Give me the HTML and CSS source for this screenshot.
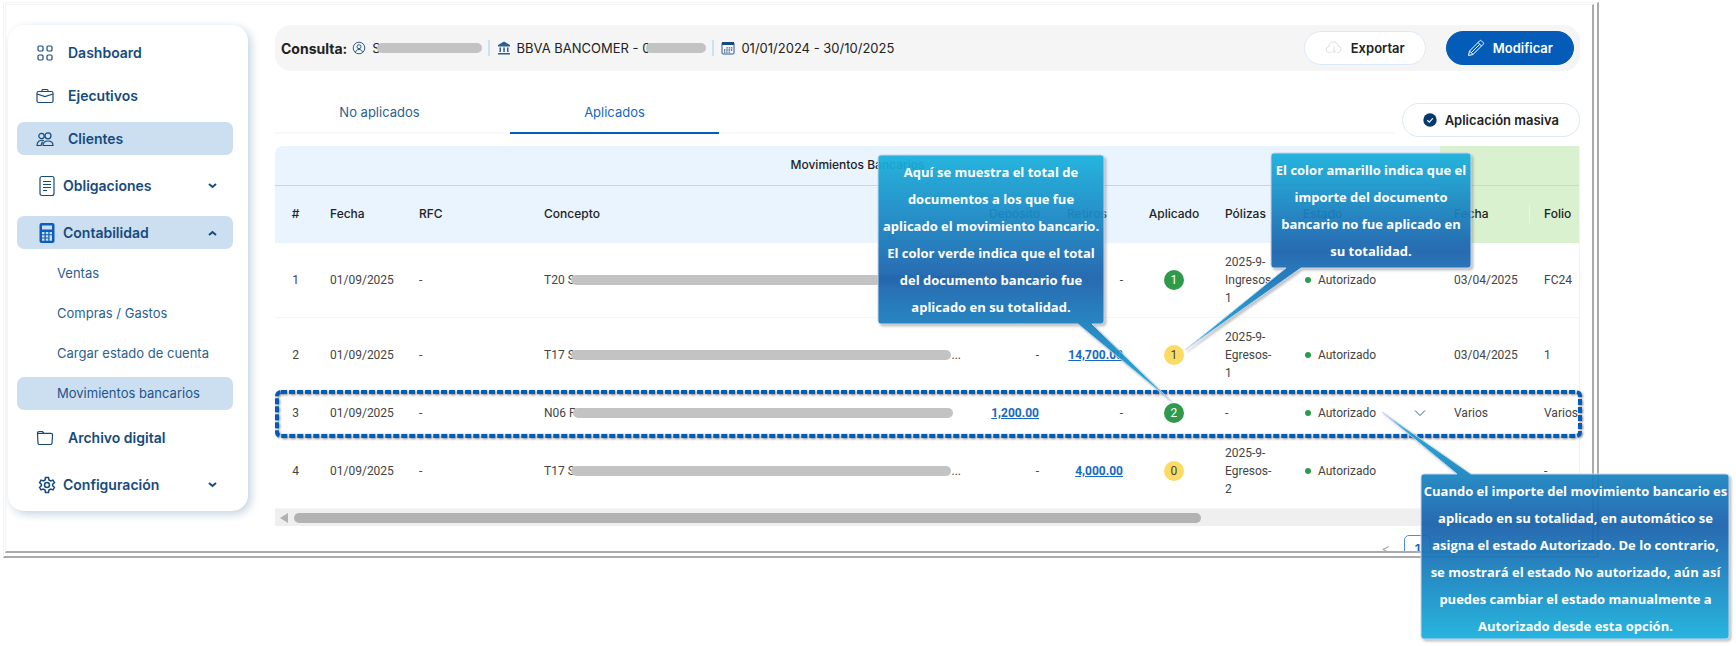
FILE: index.html
```html
<!DOCTYPE html>
<html lang="es">
<head>
<meta charset="utf-8">
<title>Movimientos bancarios</title>
<link rel="stylesheet" href="styles.css">
</head>
<body>
<div class="page">
  <div class="window">
    <div class="window-inner">
      <nav class="sidebar">
        <a class="item" href="#"><svg class="icon" viewBox="0 0 18 18"><rect x="2" y="2" width="5" height="5" rx="1.2"/><rect x="11" y="2" width="5" height="5" rx="1.2"/><rect x="2" y="11" width="5" height="5" rx="1.2"/><rect x="11" y="11" width="5" height="5" rx="1.2"/></svg>Dashboard</a>
        <a class="item" href="#"><svg class="icon" viewBox="0 0 18 18"><rect x="1" y="4.500" width="16" height="11" rx="1.500"/><path d="M6 4.500V3.500a1 1 0 0 1 1-1h4a1 1 0 0 1 1 1v1M1 7l8 2.500L17 7"/></svg>Ejecutivos</a>
        <a class="item active" href="#"><svg class="icon" viewBox="0 0 18 18"><circle cx="5.500" cy="6" r="2.700"/><circle cx="12" cy="5.800" r="3"/><path d="M7 15.500c0-3 2.200-4.500 5-4.500s5 1.500 5 4.500zM8 10.500c-4.500-1-7 1.500-7 5h4l1.500-4"/></svg>Clientes</a>
        <a class="item group" href="#"><svg class="icon tall" viewBox="0 0 18 22"><rect x="2" y="1.500" width="14" height="19" rx="2"/><path d="M5 6.500h8M5 9.500h8M5 12.500h8M5 15.500h4"/></svg>Obligaciones<svg class="caret" viewBox="0 0 9 6"><path d="M1 1l3.500 3L8 1"/></svg></a>
        <a class="item group active" href="#"><svg class="icon tall solid" viewBox="0 0 18 22"><rect x="1.500" y="1" width="15" height="20" rx="2"/><path class="cut" d="M4 3.500h10v4H4zM4 10h2.500v2.200H4zM7.800 10h2.500v2.200H7.800zM11.500 10H14v2.200h-2.500zM4 13.300h2.500v2.200H4zM7.800 13.300h2.500v2.200H7.800zM4 16.600h2.500v2.200H4zM7.800 16.600h2.500v2.200H7.800zM11.500 13.300H14v5.500h-2.500z"/></svg>Contabilidad<svg class="caret" viewBox="0 0 9 6"><path d="M1 5l3.500-3L8 5"/></svg></a>
        <div class="submenu">
          <a class="sub" href="#">Ventas</a>
          <a class="sub" href="#">Compras / Gastos</a>
          <a class="sub" href="#">Cargar estado de cuenta</a>
          <a class="sub active" href="#">Movimientos bancarios</a>
        </div>
        <a class="item" href="#"><svg class="icon" viewBox="0 0 18 18"><path d="M1.500 5V4A1.500 1.500 0 0 1 3 2.500h3.500L8 4.300h7A1.500 1.500 0 0 1 16.500 6v1L16 14a1.500 1.500 0 0 1-1.500 1.500h-11A1.500 1.500 0 0 1 2 14L1.500 5A1.200 1.200 0 0 1 2.700 4.300H8"/></svg>Archivo digital</a>
        <a class="item group" href="#"><svg class="icon bold" viewBox="0 0 24 24"><circle cx="12" cy="12" r="3.300"/><path d="M10 2h4l.6 3.200 2.300 1.300 3-1.100 2 3.500-2.400 2.100v2l2.400 2.100-2 3.500-3-1.100-2.300 1.300L14 22h-4l-.6-3.200-2.300-1.300-3 1.100-2-3.500L4.500 13v-2L2.100 8.900l2-3.500 3 1.100 2.300-1.300z"/></svg>Configuración<svg class="caret" viewBox="0 0 9 6"><path d="M1 1l3.500 3L8 1"/></svg></a>
      </nav>

      <main class="main">
        <header class="query">
          <strong class="query-title">Consulta:</strong>
          <span class="query-part"><svg class="qicon" viewBox="0 0 14 14"><circle cx="7" cy="7" r="5.800"/><circle cx="7" cy="5.700" r="2"/><path d="M3.500 11c.6-1.800 1.800-2.500 3.500-2.500s2.900.7 3.500 2.500"/></svg><span class="masked">S<span class="mask mask-name"></span></span></span>
          <span class="query-part"><svg class="qicon filled" viewBox="0 0 14 14"><path d="M7 0.500L13 4v1.500H1V4zM2.500 6.500H4V11H2.500zM6.300 6.500h1.500V11H6.300zM10 6.500h1.500V11H10zM1 12h12v1.500H1z"/></svg><span class="masked">BBVA BANCOMER - 0<span class="mask mask-account"></span></span></span>
          <span class="query-part"><svg class="qicon" viewBox="0 0 14 14"><rect x="1" y="1.500" width="12" height="11.500" rx="1"/><path class="fill" d="M1 1h12v3H1z"/><path class="dots" d="M5.500 6.800h6M3 9h8.500M3 11.200h6"/></svg>01/01/2024 - 30/10/2025</span>
          <div class="query-actions">
            <button class="btn"><svg class="bicon pale" viewBox="0 0 18 18"><path d="M6 13.500H4.500a3 3 0 0 1-.5-6 4.500 4.500 0 0 1 9-.5 3.300 3.300 0 0 1 .5 6.500H12M9 7v6.500M7 11.500l2 2 2-2"/></svg>Exportar</button>
            <button class="btn primary"><svg class="bicon" viewBox="0 0 18 18"><path d="M1.500 16.500l1-4.500L12.700 1.800a1.200 1.200 0 0 1 1.700 0l1.800 1.800a1.200 1.200 0 0 1 0 1.700L6 15.500zM2.500 12L6 15.500M11 3.500L14.500 7M4.300 13.700L12.800 5.200"/></svg>Modificar</button>
          </div>
        </header>

        <div class="tabs-row">
          <div class="tabs" role="tablist">
            <button class="tab" role="tab">No aplicados</button>
            <button class="tab selected" role="tab" aria-selected="true">Aplicados</button>
          </div>
          <button class="btn mass"><svg class="check" viewBox="0 0 14 14"><circle cx="7" cy="7" r="6.700"/><path d="M4.300 7.200l2 1.900 3.500-3.700"/></svg>Aplicación masiva</button>
        </div>

        <div class="table-wrap">
          <div class="table-view">
            <table class="grid">
              <colgroup><col class="c-num"><col class="c-date"><col class="c-rfc"><col><col class="c-dep"><col class="c-ret"><col class="c-apl"><col class="c-pol"><col class="c-est"><col class="c-date2"><col class="c-folio"></colgroup>
              <thead>
                <tr class="top"><th colspan="9">Movimientos Bancarios</th><th class="green" colspan="2"></th></tr>
                <tr class="heads"><th class="ctr">#</th><th>Fecha</th><th>RFC</th><th>Concepto</th><th class="num">Depósito</th><th class="ret">Retiros</th><th class="ctr">Aplicado</th><th>Pólizas</th><th>Estado</th><th class="green split">Fecha</th><th class="green">Folio</th></tr>
              </thead>
              <tbody>
                <tr><td class="ctr">1</td><td>01/09/2025</td><td>-</td><td><span class="masked">T20 S<span class="mask mask-text"></span></span></td><td class="num"></td><td class="num">-</td><td class="ctr"><span class="badge">1</span></td><td>2025-9-<br>Ingresos-<br>1</td><td><span class="state">Autorizado</span></td><td>03/04/2025</td><td>FC24</td></tr>
                <tr><td class="ctr">2</td><td>01/09/2025</td><td>-</td><td><span class="masked">T17 S<span class="mask mask-text"></span>...</span></td><td class="num">-</td><td class="num"><a href="#">14,700.00</a></td><td class="ctr"><span class="badge yellow">1</span></td><td>2025-9-<br>Egresos-<br>1</td><td><span class="state">Autorizado</span></td><td>03/04/2025</td><td>1</td></tr>
                <tr><td class="ctr">3</td><td>01/09/2025</td><td>-</td><td><span class="masked">N06 P<span class="mask mask-text mask-short"></span></span></td><td class="num"><a href="#">1,200.00</a></td><td class="num">-</td><td class="ctr"><span class="badge">2</span></td><td>-</td><td><span class="state">Autorizado<svg class="drop" viewBox="0 0 12 8"><path d="M1 1.500l5 5 5-5"/></svg></span></td><td>Varios</td><td>Varios</td></tr>
                <tr><td class="ctr">4</td><td>01/09/2025</td><td>-</td><td><span class="masked">T17 S<span class="mask mask-text"></span>...</span></td><td class="num">-</td><td class="num"><a href="#">4,000.00</a></td><td class="ctr"><span class="badge yellow">0</span></td><td>2025-9-<br>Egresos-<br>2</td><td><span class="state">Autorizado</span></td><td></td><td>-</td></tr>
              </tbody>
            </table>
          </div>
          <div class="scrollbar"><svg class="arrow" viewBox="0 0 8 10"><path d="M8 0v10L0 5z"/></svg><div class="thumb"></div></div>
          <svg class="highlight"><rect x="2" y="2" rx="4"/></svg>
        </div>

        <div class="pager"><button class="page-prev" aria-label="Anterior">&lt;</button><button class="page-num">1</button></div>
      </main>
    </div>
  </div>

  <div class="callout first">
    <svg class="bubble" viewBox="0 0 295 248"><defs><linearGradient id="g1" x1="0" y1="0" x2="0" y2="1"><stop offset="0" stop-color="#1ab1dc"/><stop offset=".5" stop-color="#1b62ac"/><stop offset="1" stop-color="#1ab1dc"/></linearGradient></defs><path fill="url(#g1)" d="M4 1H224a3 3 0 0 1 3 3V167a3 3 0 0 1-3 3H215L294 247L201 170H4a3 3 0 0 1-3-3V4a3 3 0 0 1 3-3z"/></svg>
    <p class="callout-text">Aquí se muestra el total de<br>documentos a los que fue<br>aplicado el movimiento bancario.<br>El color verde indica que el total<br>del documento bancario fue<br>aplicado en su totalidad.</p>
  </div>
  <div class="callout second">
    <svg class="bubble" viewBox="0 0 288 200"><defs><linearGradient id="g2" x1="0" y1="0" x2="0" y2="1"><stop offset="0" stop-color="#1ab1dc"/><stop offset=".5" stop-color="#1b62ac"/><stop offset="1" stop-color="#1ab1dc"/></linearGradient></defs><path fill="url(#g2)" d="M90 1H284a3 3 0 0 1 3 3V113a3 3 0 0 1-3 3H117L1 198L102 116H90a3 3 0 0 1-3-3V4a3 3 0 0 1 3-3z"/></svg>
    <p class="callout-text">El color amarillo indica que el<br>importe del documento<br>bancario no fue aplicado en<br>su totalidad.</p>
  </div>
  <div class="callout third">
    <svg class="bubble" viewBox="0 0 350 230"><defs><linearGradient id="g3" x1="0" y1="0" x2="0" y2="1"><stop offset="0" stop-color="#1ab1dc"/><stop offset=".5" stop-color="#1b62ac"/><stop offset="1" stop-color="#1ab1dc"/></linearGradient></defs><path fill="url(#g3)" d="M43 63H76L1 1L90 63H345a3 3 0 0 1 3 3V225a3 3 0 0 1-3 3H43a3 3 0 0 1-3-3V66a3 3 0 0 1 3-3z"/></svg>
    <p class="callout-text">Cuando el importe del movimiento bancario es<br>aplicado en su totalidad, en automático se<br>asigna el estado Autorizado. De lo contrario,<br>se mostrará el estado No autorizado, aún así<br>puedes cambiar el estado manualmente a<br>Autorizado desde esta opción.</p>
  </div>
</div>
</body>
</html>
```
FILE: styles.css
```css
* { box-sizing: border-box; }
body {
  margin: 0;
  background: #fff;
  font-family: Inter, "Liberation Sans", sans-serif;
  font-size: 13px;
  color: #222;
}
a { color: inherit; text-decoration: none; }
button { font: inherit; color: inherit; background: none; border: 0; padding: 0; cursor: pointer; }
svg { fill: none; stroke: currentColor; flex: none; display: block; }

.page { position: relative; padding: 2px 137px 88px 3px; }
.window { border: 1px solid #f3f3f5; border-right: 2px solid #aaa; border-bottom: 2px solid #aaa; padding: 1px 3px 3px 1px; }
.window-inner {
  display: flex;
  height: 549px;
  overflow: hidden;
  gap: 27px;
  padding: 20px 12px 0 2px;
  border: 1px solid #f3f3f5;
  border-right: 2px solid #aaa;
  border-bottom: 2px solid #aaa;
}

/* Sidebar */
.sidebar {
  flex: none;
  align-self: flex-start;
  width: 240px;
  padding: 11px 15px 10px 9px;
  display: flex;
  flex-direction: column;
  gap: 10px;
  border-radius: 16px;
  color: #174a7c;
  box-shadow: 3px 3px 10px #c4d3e0;
}
.item {
  display: flex;
  align-items: center;
  gap: 14px;
  height: 33px;
  padding: 0 16px 0 19px;
  border-radius: 7px;
  font-size: 14px;
  font-weight: 600;
}
.item.group { gap: 7px; margin-top: 4px; padding-left: 21px; }
.item.active, .sub.active { background: #ccdff1; }
.icon { width: 18px; height: 18px; stroke-width: 1.2; }
.icon.tall { height: 22px; }
.icon.bold { stroke-width: 2; }
.solid { fill: #0a5db8; stroke: none; }
.solid .cut { fill: #ccdff1; }
.caret { width: 9px; height: 6px; margin-left: auto; stroke-width: 2; }
.submenu { display: flex; flex-direction: column; gap: 7px; margin: -2px 0 1px; }
.sub { height: 33px; line-height: 33px; padding-left: 40px; border-radius: 7px; color: #2c5f8e; }
.sub.active { color: #1d5488; }

/* Main column */
.main { flex: 1; min-width: 0; }
.query {
  display: flex;
  align-items: center;
  height: 46px;
  padding: 0 6px;
  border-radius: 16px;
  background: #f5f5f5;
}
.query-title { font-size: 14px; margin-right: 5px; }
.query-part { display: flex; align-items: center; gap: 6px; padding-right: 6px; white-space: nowrap; }
.query-part + .query-part { border-left: 2px solid #cfe0f2; padding-left: 7px; }
.qicon { width: 14px; height: 14px; stroke: #2c5f8e; }
.qicon.filled { fill: #2c5f8e; stroke: none; }
.qicon .fill { fill: #174a7c; stroke: none; }
.qicon .dots { stroke-dasharray: 1.300 1; stroke-width: 1.300; }
.masked { display: flex; align-items: center; white-space: pre; }
.mask { background: #c3c3c3; height: 10px; border-radius: 5px; margin-left: -4px; }
.mask-name { width: 105px; }
.mask-account { width: 60px; }
.mask-text { flex: 1; }
.mask-short { margin-right: 8px; }
.query-actions { display: flex; gap: 20px; margin-left: auto; }
.btn {
  display: flex;
  align-items: center;
  justify-content: center;
  height: 34px;
  padding: 0 20px;
  gap: 8px;
  border: 1px solid #dceaf8;
  border-radius: 17px;
  background: #fff;
  font-weight: 600;
  white-space: nowrap;
}
.btn.primary { background: #045cb8; border-color: #045cb8; color: #fff; }
.bicon { width: 18px; height: 18px; }
.bicon.pale { stroke: #ddd; }
.check { width: 14px; height: 14px; fill: #06396f; stroke: none; }
.check path { fill: none; stroke: #fff; stroke-width: 1.200; }

.tabs-row { display: flex; align-items: flex-end; gap: 7px; margin-top: 30px; }
.tabs { flex: 1; display: flex; gap: 26px; border-bottom: 2px solid #f8f8f9; margin-bottom: 3px; }
.tab { width: 209px; height: 33px; padding-bottom: 10px; color: #2c5f8e; border-bottom: 2px solid transparent; margin-bottom: -2px; }
.tab.selected { color: #1868c0; border-color: #045cb8; }

/* Table */
.table-wrap { position: relative; margin-top: 9px; }
.table-view { overflow: hidden; border-radius: 8px 0 0 0; border-right: 1px solid #f3f3f3; }
.grid { width: calc(100% + 31px); table-layout: fixed; border-collapse: collapse; font-size: 12px; line-height: 18px; }
.c-num { width: 41px; } .c-date { width: 89px; } .c-rfc { width: 125px; }
.c-dep { width: 78px; } .c-ret { width: 84px; } .c-apl { width: 74px; }
.c-pol { width: 78px; } .c-est { width: 151px; } .c-date2 { width: 90px; } .c-folio { width: 80px; }
.grid th { background: #e9f4ff; font-weight: 500; text-align: left; padding: 0 14px; white-space: nowrap; }
.grid .top th { height: 39px; text-align: center; border-bottom: 1px solid #bcd8f2; }
.grid .heads th { height: 58px; }
.grid th.green { background: #daf1d0; }
.grid th.split { background: linear-gradient(#e9f4ff, #e9f4ff) right center / 1px 18px no-repeat #daf1d0; }
.grid td { font-family: Roboto, "Liberation Sans", sans-serif; color: #444; padding: 10px 14px; border-bottom: 1px solid #f5f5f5; white-space: nowrap; }
.grid .ctr { text-align: center; padding-left: 0; padding-right: 0; }
.grid .num { text-align: right; }
.grid a { color: #1868c0; font-weight: 700; text-decoration: underline; }
.badge {
  display: block;
  width: 20px;
  height: 20px;
  margin: 0 auto;
  line-height: 20px;
  border-radius: 50%;
  background: #2f9a4c;
  color: #fff;
}
.badge.yellow { background: #fddb63; color: #444; }
.state { display: flex; align-items: center; gap: 7px; padding-left: 2px; }
.state::before { content: ""; width: 6px; height: 6px; border-radius: 50%; background: #2f9a4c; }
.drop { width: 12px; height: 8px; margin-left: auto; stroke: #2c5f8e; }
.scrollbar { display: flex; align-items: center; gap: 6px; height: 17px; padding: 0 5px; background: #efefef; }
.arrow { width: 8px; height: 10px; fill: #b2b2b2; stroke: none; }
.thumb { width: 70%; height: 10px; border-radius: 5px; background: #b2b2b2; }
.highlight { position: absolute; left: 0; top: 244px; width: calc(100% + 2px); height: 50px; overflow: visible; filter: drop-shadow(1px 1px 1px #888); }
.highlight rect { width: calc(100% - 4px); height: 44px; stroke: #045cb8; stroke-width: 4; stroke-dasharray: 6 2; }

.pager { display: flex; align-items: center; justify-content: flex-end; gap: 14px; margin-top: 9px; padding-right: 149px; }
.page-prev { color: #aaa; }
.page-num { width: 27px; height: 27px; border: 1px solid #4a90d2; border-radius: 5px; color: #1868c0; font-weight: 600; }

/* Annotations */
.callout { position: absolute; }
.bubble { width: 100%; opacity: .94; stroke: #c5d3ec; stroke-width: 1; filter: drop-shadow(2px 2px 1px #8888); }
.callout-text {
  position: absolute;
  margin: 0;
  text-align: center;
  white-space: nowrap;
  color: #fff;
  font: 700 13px/27px "Open Sans", "Noto Sans", sans-serif;
}
.first { right: 564px; top: 154px; width: 295px; }
.first .callout-text { left: 0; top: 5px; width: 228px; }
.second { right: 264px; top: 152px; width: 288px; }
.second .callout-text { left: 87px; top: 5px; width: 200px; }
.third { right: 5px; top: 411px; width: 350px; }
.third .callout-text { left: 40px; top: 67px; width: 309px; }
```
